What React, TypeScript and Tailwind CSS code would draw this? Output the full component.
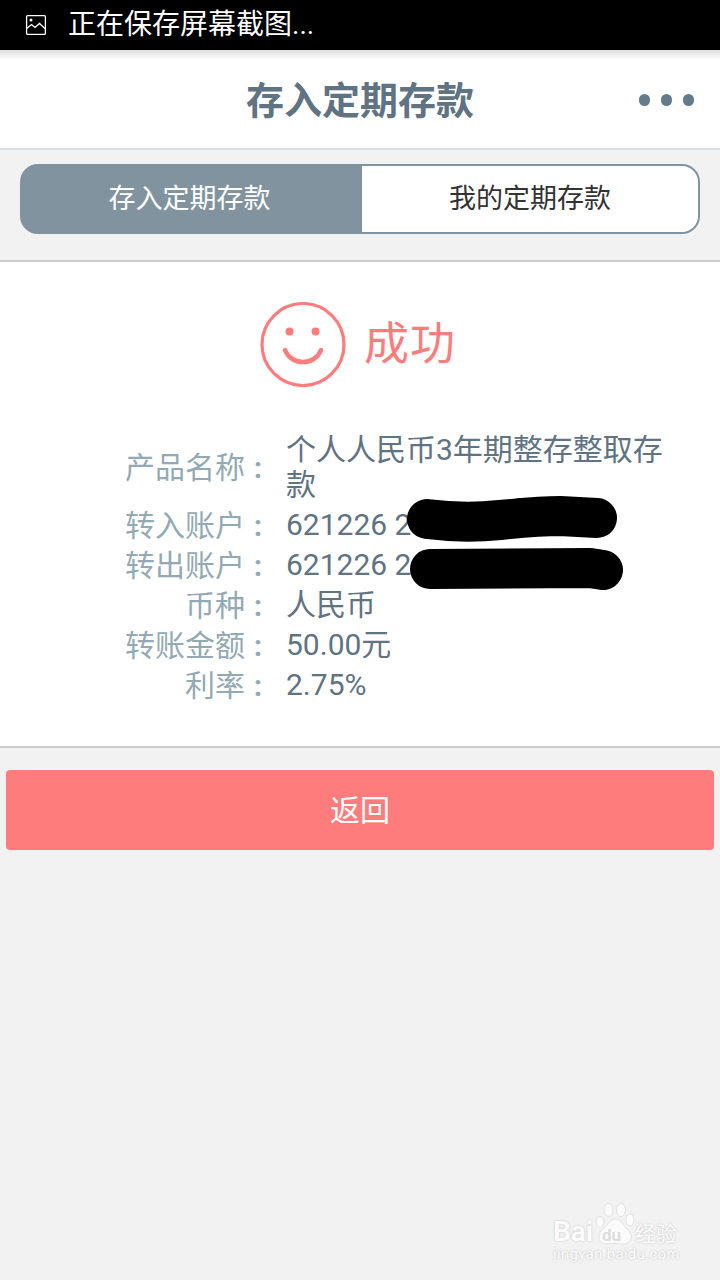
import React from "react";

const cjk = '"Roboto","Noto Sans CJK SC",sans-serif';

function Row({ label, children, big }: { label: string; children: React.ReactNode; big?: boolean }) {
  return (
    <div className={big ? "flex items-center mb-[3px]" : "flex items-center h-[40px]"}>
      <div className="w-[286px] flex justify-end pr-[15px] text-[#93a9b4] text-[30px] leading-[35px] shrink-0 whitespace-nowrap">
        <span>{label}</span>
        <span className="w-[26px] text-center font-bold">:</span>
      </div>
      <div className="w-[395px] text-[#5f7383] text-[30px] leading-[35px] -mt-[1px]">{children}</div>
    </div>
  );
}

export default function App() {
  return (
    <div className="relative w-[720px] h-[1280px] bg-[#f2f2f2] overflow-hidden flex flex-col" style={{ fontFamily: cjk }}>
      <div className="h-[50px] bg-black flex items-center text-white shrink-0">
        <svg width="22" height="22" viewBox="0 0 22 22" className="ml-[25px]" fill="none" stroke="white" strokeWidth="1.3">
          <rect x="1.6" y="1.6" width="18.8" height="18.8" rx="1" />
          <circle cx="6" cy="6" r="1.5" fill="white" stroke="none" />
          <path d="M1.6 14.5 L6.5 10.5 L10 13.5 L14.5 9.5 L20.4 15" />
        </svg>
        <span className="ml-[21px] text-[28px] leading-[50px] whitespace-nowrap">正在保存屏幕截图...</span>
      </div>
      <div className="h-[100px] bg-gradient-to-b from-[#dddddd] to-white bg-[length:100%_10px] bg-no-repeat bg-white border-b-2 border-[#d8e0e6] flex items-center justify-center relative shrink-0">
        <span className="text-[38px] font-bold text-[#5f7383] leading-none mt-[4px]">存入定期存款</span>
        <div className="absolute right-[26px] top-[44px] flex gap-[11px]">
          <span className="w-[11px] h-[12px] rounded-full bg-[#657b8b]" />
          <span className="w-[11px] h-[12px] rounded-full bg-[#657b8b]" />
          <span className="w-[11px] h-[12px] rounded-full bg-[#657b8b]" />
        </div>
      </div>
      <div className="h-[112px] px-[20px] pt-[14px] border-b-2 border-[#cccccc] shrink-0">
        <div className="h-[70px] flex rounded-[18px] border-2 border-[#8293a0] bg-[#8293a0]">
          <div className="w-[340px] pr-[5px] text-white text-[27px] flex items-center justify-center">存入定期存款</div>
          <div className="flex-1 bg-white rounded-r-[16px] text-[#333333] text-[27px] flex items-center justify-center">我的定期存款</div>
        </div>
      </div>
      <div className="h-[486px] bg-white border-b-2 border-[#cccccc] shrink-0 relative">
        <div className="flex items-center justify-center pt-[41px] h-[170px] pb-[47px]">
          <svg width="86" height="85" viewBox="0 0 86 85" fill="none" stroke="#ff7c7c" className="-ml-[4px]">
            <circle cx="43" cy="42.5" r="41" strokeWidth="3.2" />
            <circle cx="29.5" cy="29.5" r="4" fill="#ff7c7c" stroke="none" />
            <circle cx="55.5" cy="29.5" r="4" fill="#ff7c7c" stroke="none" />
            <path d="M25 48 C31 64 55 64 61 48" strokeWidth="4.5" strokeLinecap="round" />
          </svg>
          <span className="ml-[18px] mt-[1px] text-[45px] leading-none tracking-[1px] text-[#ff7c7c] whitespace-nowrap">成功</span>
        </div>
        <div className="absolute left-0 top-[171px]">
          <Row label="产品名称" big>个人人民币3年期整存整取存款</Row>
          <Row label="转入账户">621226 2</Row>
          <Row label="转出账户">621226 2</Row>
          <Row label="币种">人民币</Row>
          <Row label="转账金额">50.00元</Row>
          <Row label="利率">2.75%</Row>
        </div>
        <svg className="absolute left-[400px] top-[230px]" width="230" height="100" viewBox="0 0 230 100" fill="none" stroke="black" strokeLinecap="round" strokeLinejoin="round">
          <path d="M27 27 C50 30 70 31 100 28 C120 26 140 24 160 24 L197 26" strokeWidth="40" />
          <path d="M120 16 L170 16" strokeWidth="20" />
          <path d="M30 77 L190 76 L203 78" strokeWidth="40" />
        </svg>
      </div>
      <div className="mx-[6px] mt-[22px] h-[80px] rounded-[4px] bg-[#ff7c7c] text-white text-[30px] flex items-center justify-center shrink-0">返回</div>
      <div className="absolute left-[552px] top-[1200px] w-[130px] h-[68px]">
        <svg className="absolute left-[43px] top-[3px]" width="40" height="42" viewBox="0 0 40 42" fill="#fbfbfb" stroke="#dcdcdc" strokeWidth="0.8">
          <ellipse cx="5" cy="19" rx="4" ry="5.5" />
          <ellipse cx="13.5" cy="7" rx="4.5" ry="6.5" />
          <ellipse cx="26" cy="7" rx="4.5" ry="6.5" />
          <ellipse cx="35" cy="17" rx="4" ry="6" />
          <path d="M20 16 C26 16 27 22 33 27 C40 33 35 42 27 41 C22 40 18 40 13 41 C5 42 1 33 7 27 C13 23 14 16 20 16Z" />
        </svg>
        <span className="absolute left-[1px] top-[15px] text-[28px] leading-[33px] font-bold text-[#fbfbfb] [text-shadow:0_0_2px_#bdbdbd]">Bai</span>
        <span className="absolute left-[50px] top-[25px] text-[17px] leading-[20px] font-bold text-[#dedede]">du</span>
        <span className="absolute left-[83px] top-[21px] text-[21px] leading-[26px] whitespace-nowrap text-[#fbfbfb] [text-shadow:0_0_2px_#bdbdbd]">经验</span>
        <span className="absolute left-[1px] top-[45px] text-[15px] leading-[18px] whitespace-nowrap text-[#fbfbfb] tracking-[0.3px] [text-shadow:0_0_2px_#bdbdbd]">jingyan.baidu.com</span>
      </div>
    </div>
  );
}
